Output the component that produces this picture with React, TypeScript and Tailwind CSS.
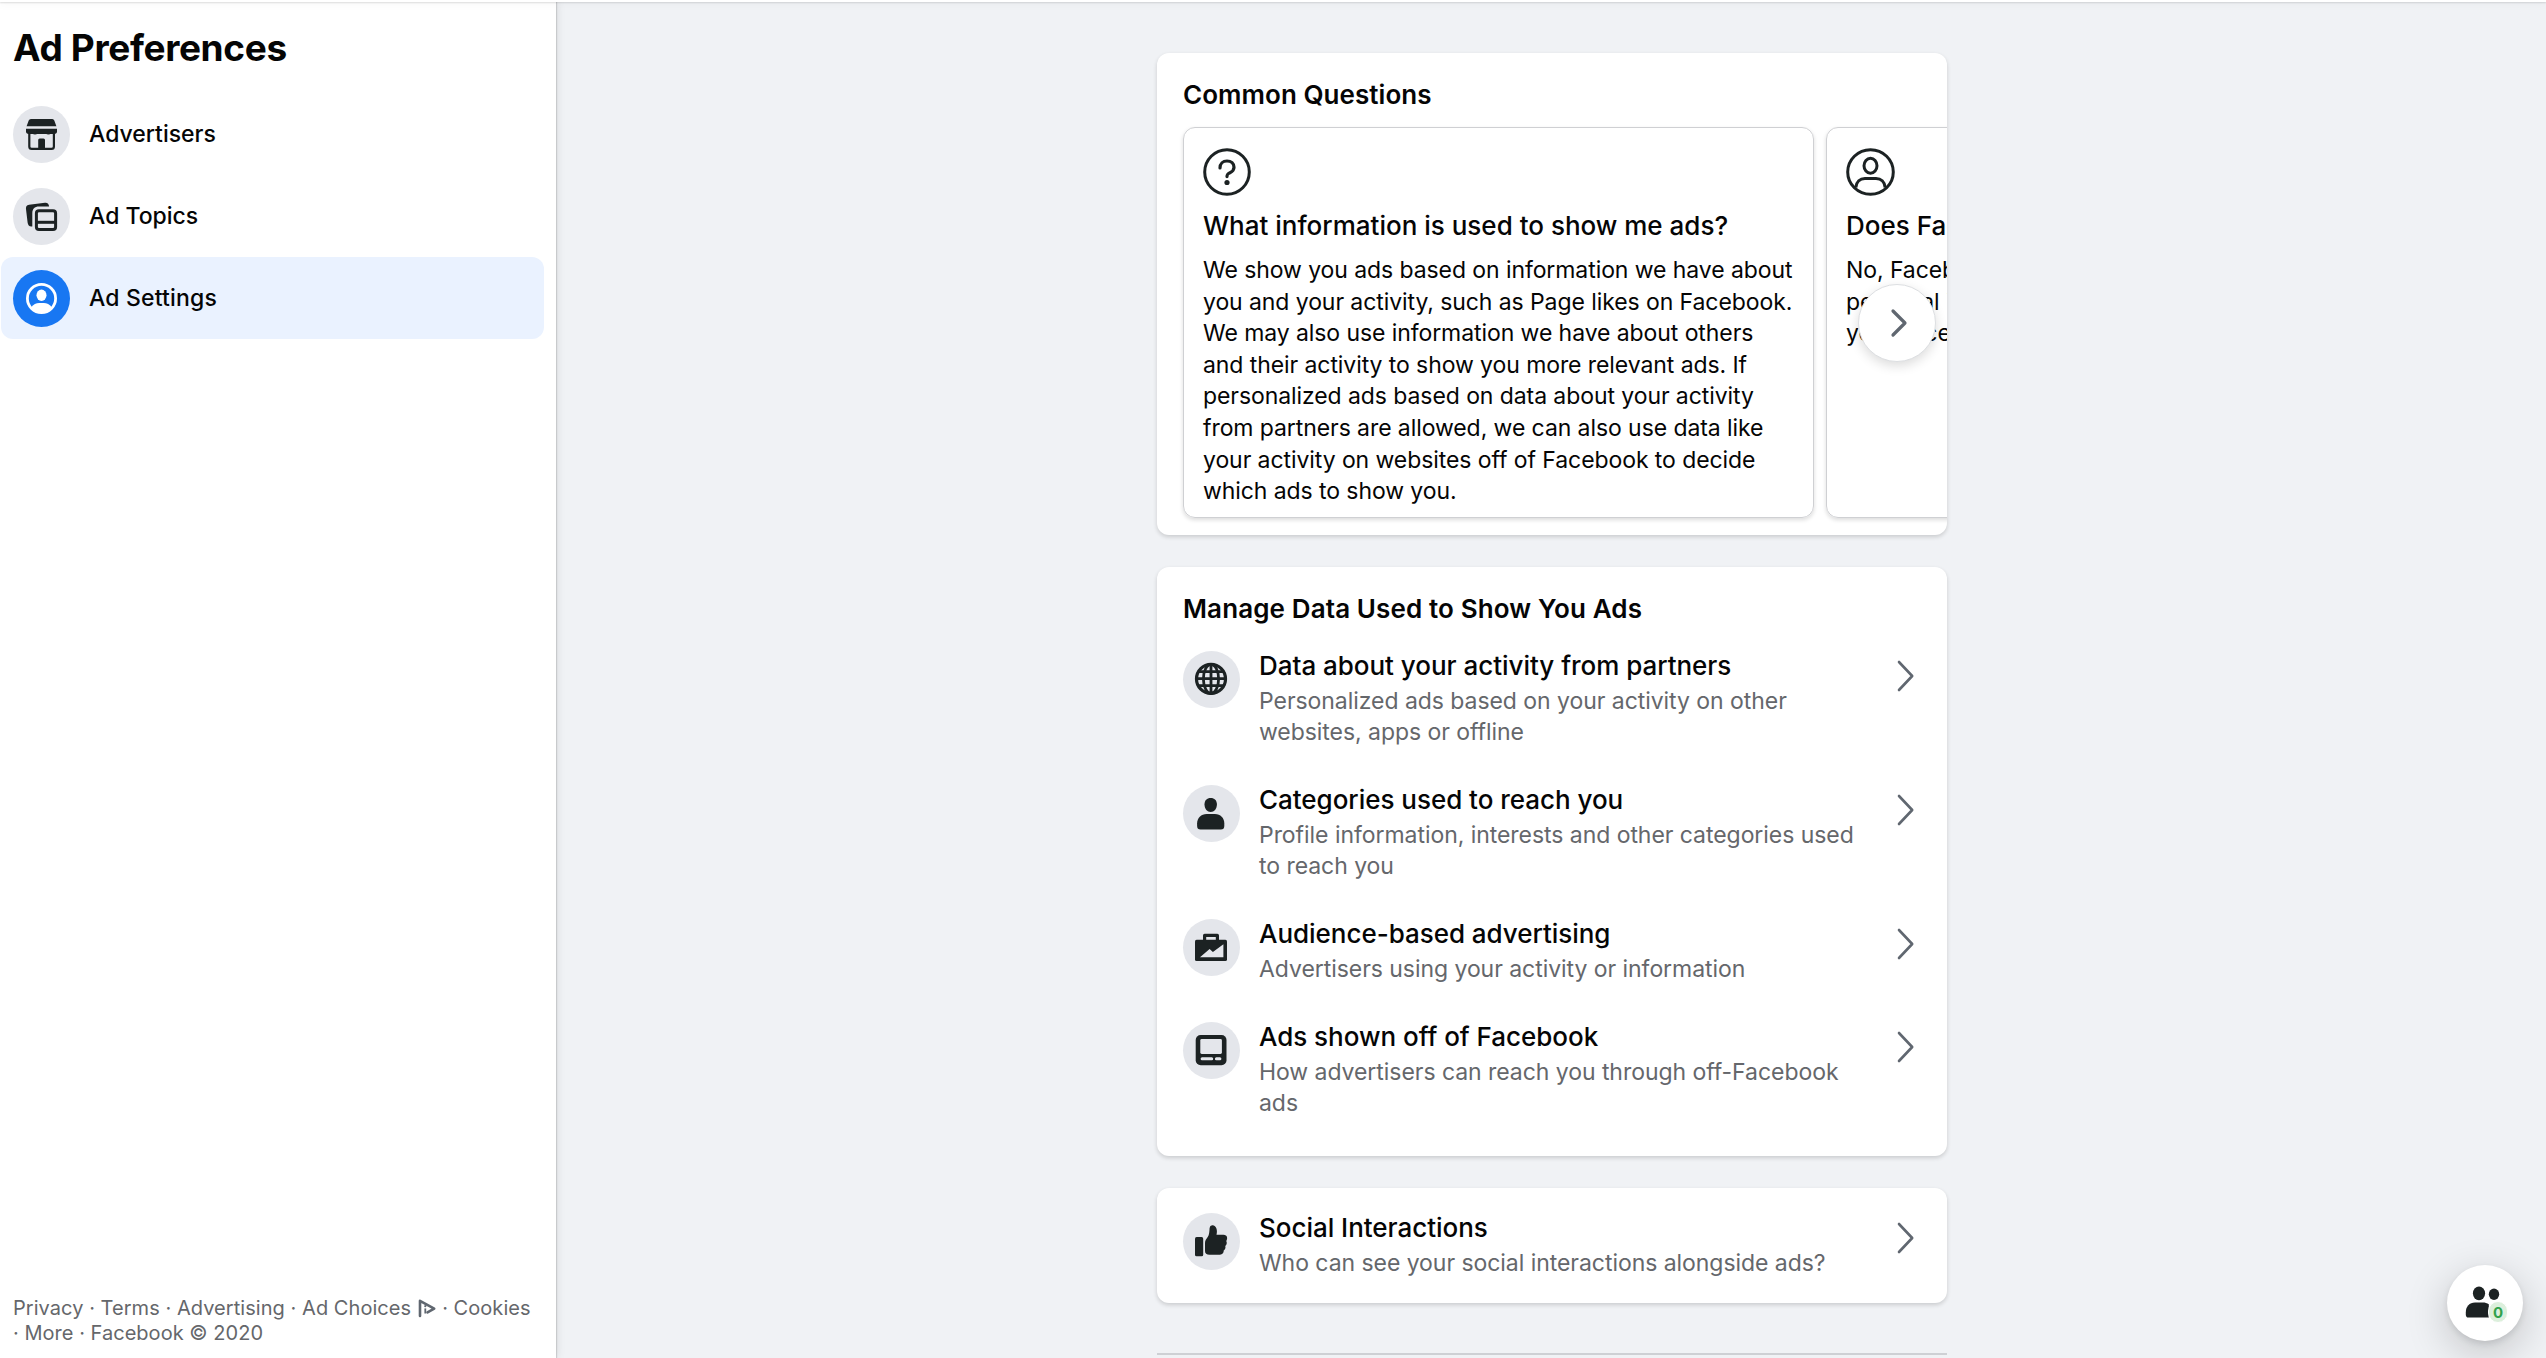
import type { ReactNode } from "react";

const INK = "#1c2223";

function Disc({ children, active = false }: { children: ReactNode; active?: boolean }) {
  return (
    <div
      className={
        active
          ? "h-[57px] w-[57px] shrink-0 rounded-full bg-[#1877f2]"
          : "h-[57px] w-[57px] shrink-0 rounded-full bg-[#e4e6eb]"
      }
    >
      <svg width="57" height="57" viewBox="-28.5 -28.5 57 57" fill="none">
        {children}
      </svg>
    </div>
  );
}

const StoreIcon = () => (
  <>
    <path d="M-10.5-15.5H10.8Q12.3-15.5 12.8-14L14.9-8.2H-14.9L-12.8-14Q-12.3-15.5-10.5-15.5Z" fill={INK} />
    <path d="M-15.5-5.8H15.5V-3Q15.5-.6 12.7-.6H-12.7Q-15.5-.6-15.5-3Z" fill={INK} />
    <path d="M-12.2-2V12Q-12.2 14.4-9.8 14.4H10Q12.4 14.4 12.4 12V-2" stroke={INK} strokeWidth="2.2" />
    <path d="M-9-1.2a2.6 1.8 0 0 0 5 0a2.6 1.8 0 0 0 4.2 0a2.6 1.8 0 0 0 4.2 0a2.6 1.8 0 0 0 5 0z" fill={INK} />
    <path d="M-3.3 14V5.5Q-3.3 4-1.8 4H2Q3.5 4 3.5 5.5V14Z" fill={INK} />
  </>
);

const TopicsIcon = () => (
  <>
    <path
      d="M-15.4-6.5C-16-9.8-15-11.3-12.4-11.8L3.4-13.8C5.8-14.2 7.4-12.6 7.6-9.9H-2.5C-7-9.9-9.2-7.4-9.2-3V10C-12 10.6-13.6 8.6-13.9 6Z"
      fill={INK}
    />
    <rect x="-5.1" y="-5.8" width="19.2" height="18.9" rx="2.6" stroke={INK} strokeWidth="3" />
    <path d="M-5 5.8H14" stroke={INK} strokeWidth="3" />
  </>
);

const ProfileRingIcon = () => (
  <>
    <circle r="14.1" stroke="#fff" strokeWidth="2.8" />
    <ellipse cy="-3.2" rx="5" ry="5.7" fill="#fff" />
    <path d="M-10.6 9.2C-8.2 5.8-5.2 4.4-2.4 4.4H2.4C5.2 4.4 8.2 5.8 10.6 9.2C8 12.4 4.4 14.2 0 14.2S-8 12.4-10.6 9.2Z" fill="#fff" />
  </>
);

const GlobeIcon = () => (
  <g stroke={INK} strokeWidth="2.8" transform="translate(-.5 -.6)">
    <circle r="14.5" strokeWidth="3.2" />
    <ellipse rx="7.6" ry="14.6" />
    <path d="M0-14.6V14.6M-14.6-.2H14.6M-12.6-7.3H12.6M-12.6 6.8H12.6" />
  </g>
);

const PersonIcon = () => (
  <>
    <path d="M-.8-15.4C3-15.4 5.4-13 5.4-9C5.4-4.6 2.6-1.5-.8-1.5S-7-4.6-7-9C-7-13-4.6-15.4-.8-15.4Z" fill={INK} />
    <path
      d="M-4.8.4H3.4C9 .4 12.8 4.4 12.8 9.8V12.4C12.8 14.8 11.6 15.9 9.4 15.9H-11C-13.2 15.9-14.4 14.8-14.4 12.4V9.8C-14.4 4.4-10.4.4-4.8.4Z"
      fill={INK}
    />
  </>
);

const BriefcaseIcon = () => (
  <>
    <path d="M-6.9-7V-12.1H5.9V-7" stroke={INK} strokeWidth="3.2" strokeLinejoin="round" />
    <rect x="-16.5" y="-7.8" width="32" height="21.4" rx="1.6" fill={INK} />
    <path d="M-11.5 9.8L-1.9 1.6L1.4 4.4L11.9-3.2V9.8Z" fill="#e4e6eb" />
  </>
);

const ScreenIcon = () => (
  <>
    <rect x="-15.8" y="-15.4" width="30.8" height="30.2" rx="5" fill={INK} />
    <rect x="-11.2" y="-11.4" width="21.6" height="14.8" rx="1.4" fill="#e4e6eb" />
    <path d="M-9.4 8.2H.2M4.9 8.2H8.4" stroke="#e4e6eb" strokeWidth="3" strokeLinecap="round" />
  </>
);

const ThumbIcon = () => (
  <>
    <rect x="-16.5" y="-4.4" width="8.2" height="19.2" rx="1.6" fill={INK} />
    <path
      d="M-6.5 1.5C-6.5-1.2-5.2-2.6-3.8-4.6C-2.2-6.8-2.1-10-1.9-13.6Q-1.6-16.4 1-16.2C5-15.8 6.2-11 5-6.8H12C16-6.8 16.4-3 14.8-.5C15.8 1.5 15.1 3.5 13.8 4.6C14.4 6.8 13.4 8.3 12.2 9C12.3 12 10 13.3 7.5 13.3H-2C-5 13.3-6.5 12-6.5 9.5Z"
      fill={INK}
    />
  </>
);

function Chevron() {
  return (
    <svg className="mt-[10.5px] shrink-0" width="20" height="32" viewBox="0 0 20 32" fill="none">
      <path d="M3 2L16.2 16L3 30" stroke="#606770" strokeWidth="2.6" strokeLinecap="round" strokeLinejoin="round" />
    </svg>
  );
}

function NavItem({ icon, label, active = false }: { icon: ReactNode; label: string; active?: boolean }) {
  return (
    <a
      className={
        active
          ? "ml-px flex h-[82px] w-[543px] items-center gap-[19px] rounded-xl bg-[#eaf2ff] pl-3 tracking-[0.18px]"
          : "ml-px flex h-[82px] w-[543px] items-center gap-[19px] rounded-xl pl-3"
      }
    >
      <Disc active={active}>{icon}</Disc>
      <span className="text-[23px] font-medium">{label}</span>
    </a>
  );
}

function Row({ icon, title, lines }: { icon: ReactNode; title: string; lines: string[] }) {
  return (
    <div className="flex items-start">
      <div className="mt-[1.5px] mr-[19px]">
        <Disc>{icon}</Disc>
      </div>
      <div className="flex-1 whitespace-nowrap">
        <div className="text-[26px] leading-8 font-medium tracking-[-0.03px]">{title}</div>
        <div className="mt-[4px] text-[23px] leading-[31.5px] tracking-[-0.05px] text-[#65676b]">
          {lines.map((l) => (
            <div key={l}>{l}</div>
          ))}
        </div>
      </div>
      <Chevron />
    </div>
  );
}

function QuestionCard({ icon, title, lines }: { icon: ReactNode; title: string; lines: string[] }) {
  return (
    <div className="w-[631px] shrink-0 rounded-xl border border-[#cfd0d3] pt-[20px] pb-[9.5px] pl-[19px] whitespace-nowrap shadow-[0_2px_4px_rgba(0,0,0,0.14)]">
      {icon}
      <div className="mt-[14px] text-[26px] leading-8 font-medium">{title}</div>
      <div className="mt-[13.5px] text-[23px] leading-[31.6px] tracking-[-0.08px]">
        {lines.map((l) => (
          <div key={l}>{l}</div>
        ))}
      </div>
    </div>
  );
}

const QuestionIcon = () => (
  <svg className="block" width="48" height="48" viewBox="0 0 48 48" fill="none">
    <circle cx="24" cy="24" r="22.3" stroke={INK} strokeWidth="3" />
    <path
      d="M17 20C17 15.5 20 13 24 13C28.2 13 31 15.6 31 19.3C31 22 29.5 23.6 27 24.7C24.5 25.8 24 26.4 24 28.6"
      stroke={INK}
      strokeWidth="3.2"
      strokeLinecap="round"
    />
    <circle cx="24" cy="34.5" r="2.6" fill={INK} />
  </svg>
);

const ProfileIcon = () => (
  <svg className="block" width="49" height="48" viewBox="0 0 49 48" fill="none">
    <ellipse cx="24.5" cy="24" rx="22.8" ry="22.3" stroke={INK} strokeWidth="3" />
    <ellipse cx="24.5" cy="17.7" rx="6.5" ry="7.5" stroke={INK} strokeWidth="3" />
    <path d="M9.8 39.5C10.3 33.6 14 30.4 19 30.4H30C35 30.4 38.7 33.6 39.2 39.5" stroke={INK} strokeWidth="3" />
  </svg>
);

const cardShadow = "rounded-xl bg-white shadow-[0_2px_4px_rgba(0,0,0,0.16)]";

export default function App() {
  return (
    <div className="relative flex h-[1358px] w-[2546px] flex-col overflow-hidden bg-[#f0f2f5] font-['Inter',sans-serif] text-[#050505]">
      <header className="relative z-20 h-[2px] shrink-0 bg-white shadow-[0_1px_2px_rgba(0,0,0,0.14),0_2px_8px_rgba(0,0,0,0.08)]" />
      <div className="flex min-h-0 flex-1">
        <aside className="relative z-10 flex w-[556px] shrink-0 flex-col bg-white shadow-[1px_0_1px_rgba(0,0,0,0.12),2px_0_8px_rgba(0,0,0,0.08)]">
          <h1 className="mt-[22px] ml-[13px] text-[37px] leading-[48px] font-bold tracking-[-0.36px] whitespace-nowrap">
            Ad Preferences
          </h1>
          <nav className="mt-[21px] flex flex-col">
            <NavItem icon={<StoreIcon />} label="Advertisers" />
            <NavItem icon={<TopicsIcon />} label="Ad Topics" />
            <NavItem icon={<ProfileRingIcon />} label="Ad Settings" active />
          </nav>
          <footer className="mt-auto mb-[11.4px] ml-[13px] text-[20px] leading-[25.3px] whitespace-nowrap text-[#65676b]">
            <div className="flex items-center tracking-[0.05px]">
              <span>Privacy · Terms · Advertising · Ad Choices</span>
              <svg className="mr-[6px] ml-[7px]" width="18" height="19" viewBox="0 0 18 19" fill="none">
                <path d="M2 17V1.8L16.2 9.6L9.5 13.4" stroke="#606770" strokeWidth="2.6" strokeLinejoin="round" strokeLinecap="round" />
                <path d="M7.3 9.4V14.5" stroke="#606770" strokeWidth="1.8" />
                <circle cx="7.3" cy="7.2" r="1.1" fill="#606770" />
              </svg>
              <span>· Cookies</span>
            </div>
            <div className="tracking-[0.03px]">· More · Facebook © 2020</div>
          </footer>
        </aside>

        <main className="ml-[601px] flex w-[790px] shrink-0 flex-col">
          <section className={`relative mt-[51px] h-[481.5px] shrink-0 pt-[25.5px] ${cardShadow}`}>
            <h2 className="pl-[26px] text-[26px] leading-8 font-semibold tracking-[0.05px]">Common Questions</h2>
            <div className="mt-[9px] flex gap-[12px] overflow-hidden pt-[7px] pb-3 pl-[26px]">
              <QuestionCard
                icon={<QuestionIcon />}
                title="What information is used to show me ads?"
                lines={[
                  "We show you ads based on information we have about",
                  "you and your activity, such as Page likes on Facebook.",
                  "We may also use information we have about others",
                  "and their activity to show you more relevant ads. If",
                  "personalized ads based on data about your activity",
                  "from partners are allowed, we can also use data like",
                  "your activity on websites off of Facebook to decide",
                  "which ads to show you.",
                ]}
              />
              <QuestionCard
                icon={<ProfileIcon />}
                title="Does Facebook sell my information?"
                lines={["No, Facebook doesn't sell your", "personal information to anyone", "you place ads with."]}
              />
            </div>
            <button className="absolute top-[231px] left-[701px] flex h-[78px] w-[78px] items-center justify-center rounded-full border border-[#dddfe2] bg-white shadow-[0_4px_12px_rgba(0,0,0,0.14)]">
              <svg className="ml-[4px]" width="20" height="32" viewBox="0 0 20 32" fill="none">
                <path d="M4 4L16 16L4 28" stroke="#606770" strokeWidth="3.2" strokeLinecap="round" strokeLinejoin="round" />
              </svg>
            </button>
          </section>

          <section className={`mt-[32.5px] h-[589px] shrink-0 pt-[25.5px] pr-[31px] pl-[26px] ${cardShadow}`}>
            <h2 className="text-[26px] leading-8 font-semibold tracking-[0.12px]">Manage Data Used to Show You Ads</h2>
            <div className="mt-[25px] flex flex-col gap-[35.2px]">
              <Row
                icon={<GlobeIcon />}
                title="Data about your activity from partners"
                lines={["Personalized ads based on your activity on other", "websites, apps or offline"]}
              />
              <Row
                icon={<PersonIcon />}
                title="Categories used to reach you"
                lines={["Profile information, interests and other categories used", "to reach you"]}
              />
              <Row icon={<BriefcaseIcon />} title="Audience-based advertising" lines={["Advertisers using your activity or information"]} />
              <Row
                icon={<ScreenIcon />}
                title="Ads shown off of Facebook"
                lines={["How advertisers can reach you through off-Facebook", "ads"]}
              />
            </div>
          </section>

          <section className={`mt-8 h-[115px] shrink-0 pt-[23.5px] pr-[31px] pl-[26px] ${cardShadow}`}>
            <Row icon={<ThumbIcon />} title="Social Interactions" lines={["Who can see your social interactions alongside ads?"]} />
          </section>

          <hr className="mt-[50px] h-[2px] shrink-0 border-0 bg-[#ced0d4]" />
        </main>
      </div>

      <div className="absolute top-[1265px] left-[2447px] h-[76px] w-[76px] rounded-full bg-white shadow-[0_3px_6px_rgba(0,0,0,0.1),0_12px_44px_rgba(0,0,0,0.2)]">
        <svg width="76" height="76" viewBox="-38 -38 76 76">
          <ellipse cx="-6" cy="-9.7" rx="6.1" ry="6.9" fill={INK} />
          <path d="M-10-.4H-2C0-.4 2 .2 3.8 1.2V14.6H-16.5C-18.4 14.6-19.2 13.4-19.2 11.4V9.5C-19.2 3.5-15.5-.4-10-.4Z" fill={INK} />
          <ellipse cx="9" cy="-8.7" rx="5.2" ry="5.7" fill={INK} />
        </svg>
        <span className="absolute top-[36px] left-[41px] flex h-[22px] w-[20px] items-center justify-center rounded-full border border-white bg-[#dcefdc] text-[15px] leading-none font-bold text-[#31a24c]">
          0
        </span>
      </div>
    </div>
  );
}
